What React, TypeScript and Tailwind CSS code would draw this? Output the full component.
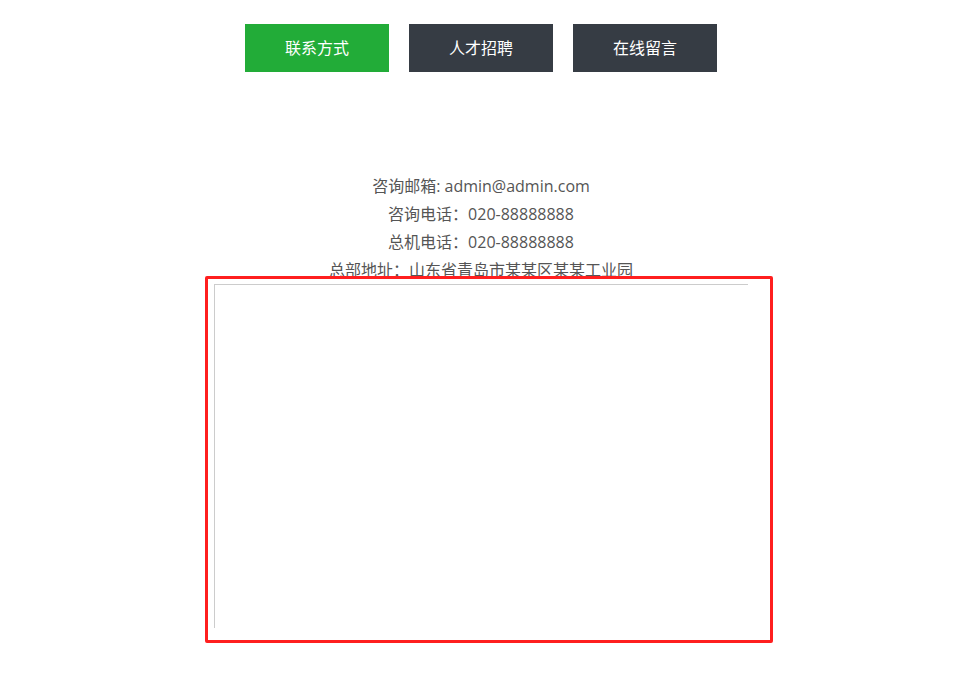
import React from 'react';

const tabs = [
  { label: '联系方式', active: true },
  { label: '人才招聘', active: false },
  { label: '在线留言', active: false },
];

const lines = [
  '咨询邮箱: admin@admin.com',
  '咨询电话：020-88888888',
  '总机电话：020-88888888',
  '总部地址：山东省青岛市某某区某某工业园',
];

export default function App() {
  return (
    <div
      className="relative min-h-[678px] bg-white pr-[12px]"
      style={{ fontFamily: '"Open Sans", "Noto Sans CJK SC", sans-serif' }}
    >
      {/* Tabs */}
      <div className="flex justify-center gap-5 pt-6">
        {tabs.map((t) => (
          <button
            key={t.label}
            className={`h-12 w-36 text-base text-white ${t.active ? 'bg-[#22ac38]' : 'bg-[#363c44]'}`}
          >
            {t.label}
          </button>
        ))}
      </div>

      {/* Contact info */}
      <div className="mt-[100px] flex flex-col items-center text-base leading-7 text-[#555]">
        {lines.map((l) => (
          <p key={l}>{l}</p>
        ))}
        {/* map frame */}
        <div className="h-[344px] w-[534px] border-l border-t border-[#ccc] bg-white" />
      </div>

      {/* highlight box */}
      <div className="pointer-events-none absolute left-[205px] top-[276px] h-[367px] w-[568px] rounded-[2px] border-[3px] border-[#ff1f1f]" />
    </div>
  );
}
